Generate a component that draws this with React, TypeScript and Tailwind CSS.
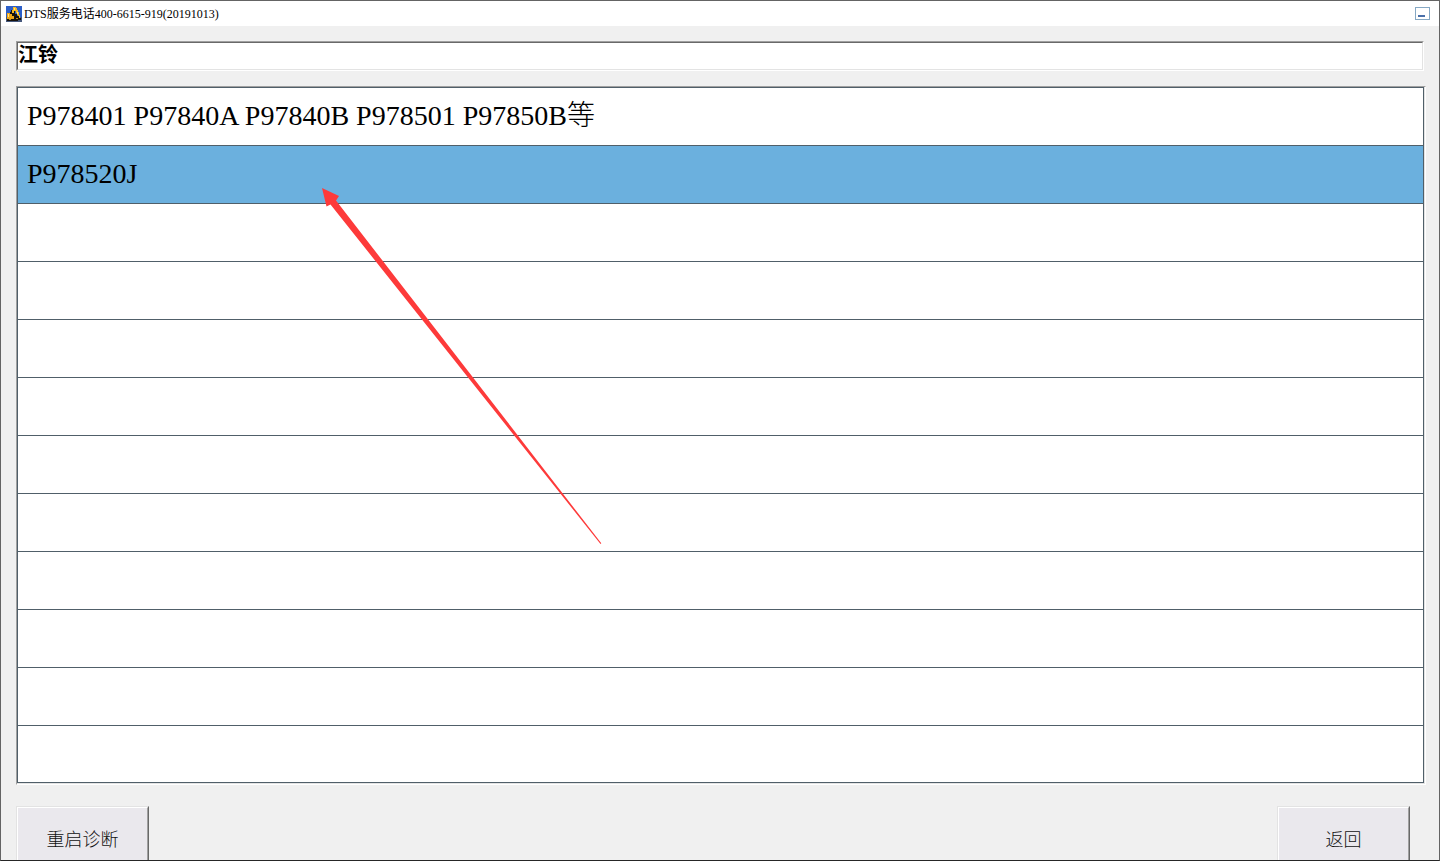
import React, { useState } from "react";

const MODELS = ["P978401 P97840A P97840B P978501 P97850B等", "P978520J"];
const ROW_COUNT = 12;

/* Yellow digger on a blue tile, shown at the left of the title bar. */
function AppIcon() {
  return (
    <svg className="h-4 w-4 shrink-0" viewBox="0 0 16 16" shapeRendering="crispEdges" aria-hidden="true">
      <rect width="16" height="16" fill="#2c5fc8" />
      <rect y="11" width="16" height="5" fill="#46587c" />
      <path d="M7 1h3v1h1v2h1v2h1v3h1v3h-2V9h-1V7h-1V5H8v2H6V4h1z" fill="#f5b820" />
      <path d="M1 7h3v1h2v2h2v3H1z" fill="#eda515" />
      <path d="M8 2h1v2H8zM2 8h1v3H2zM11 6h1v2h-1z" fill="#ffe48c" />
      <path d="M5 4h1v3h2V5h1v3h2v2h2v2h2v2h-3v1H1v-2h7v-3H6V8H4V6h1z" fill="#17120c" />
      <path d="M3 13h2v1H3zM10 12h2v1h-2z" fill="#c98a12" />
    </svg>
  );
}

function PanelButton({ children }: { children: React.ReactNode }) {
  return (
    <button
      type="button"
      className="h-[66px] w-[133px] border border-t-[#e3e3e3] border-r-[#696969] border-b-[#696969] border-l-[#e3e3e3]"
    >
      <span className="flex h-full items-center justify-center border border-t-white border-r-[#a0a0a0] border-b-[#a0a0a0] border-l-white bg-[#eae8ed] pt-0.5 text-lg font-light text-[#111]">
        {children}
      </span>
    </button>
  );
}

export default function App() {
  const [brand, setBrand] = useState("江铃");
  const [selected, setSelected] = useState(1);

  return (
    <main className="relative flex h-screen flex-col overflow-hidden border border-[#646464] border-b-[#262626] bg-[#f0f0f0] font-['Liberation_Serif','Noto_Sans_CJK_SC',serif] text-black">
      <header className="flex h-[25px] shrink-0 items-center justify-between bg-white pr-[9px] pl-[5px]">
        <div className="flex items-center gap-[2px]">
          <AppIcon />
          <h1 className="text-xs leading-4 whitespace-nowrap">DTS服务电话400-6615-919(20191013)</h1>
        </div>
        <button
          type="button"
          aria-label="最小化"
          className="flex h-[13px] w-[15px] items-end border border-[#86a8c4] bg-white pb-[2px] pl-[2px]"
        >
          <span className="h-[2px] w-[7px] bg-[#4a6fa9]" />
        </button>
      </header>

      <section className="shrink-0 px-[15px] pt-[15px]">
        <div className="border border-t-[#a0a0a0] border-r-white border-b-white border-l-[#a0a0a0]">
          <input
            aria-label="品牌"
            value={brand}
            onChange={(e) => setBrand(e.target.value)}
            className="block h-7 w-full border border-t-[#696969] border-r-[#e3e3e3] border-b-[#e3e3e3] border-l-[#696969] bg-white pb-1.5 text-xl leading-5 font-bold outline-none"
          />
        </div>
      </section>

      <section className="shrink-0 pt-[15px] pr-[13px] pl-[15px]">
        <div className="border border-t-[#a0a0a0] border-r-white border-b-white border-l-[#a0a0a0]">
          <div className="border-r border-b border-[#e3e3e3]">
            <ul className="border border-[#505f69] bg-white">
              {Array.from({ length: ROW_COUNT }, (_, i) => (
                <li key={i} className="h-[58px] border-b border-[#505f69] last:h-14 last:border-b-0">
                  {MODELS[i] && (
                    <button
                      type="button"
                      onClick={() => setSelected(i)}
                      className={`block h-full w-full pb-0.5 pl-[9px] text-left text-[28px] leading-8 font-light whitespace-nowrap ${
                        selected === i ? "bg-[#6bb0de]" : "bg-white"
                      }`}
                    >
                      {MODELS[i]}
                    </button>
                  )}
                </li>
              ))}
            </ul>
          </div>
        </div>
      </section>

      <footer className="flex shrink-0 justify-between pt-[21px] pr-[29px] pl-[15px]">
        <PanelButton>重启诊断</PanelButton>
        <PanelButton>返回</PanelButton>
      </footer>

      {/* Pointer laid over the list, aimed at the second row */}
      <svg
        className="pointer-events-none absolute top-[187px] left-[321px] h-[358px] w-[282px]"
        viewBox="322 188 282 358"
        aria-hidden="true"
      >
        <path d="M322 188L339 196L336 200.500L601.300 543.300L600.500 544L330.500 204.500L326.500 206.500Z" fill="#fd3a3a" />
      </svg>
    </main>
  );
}
